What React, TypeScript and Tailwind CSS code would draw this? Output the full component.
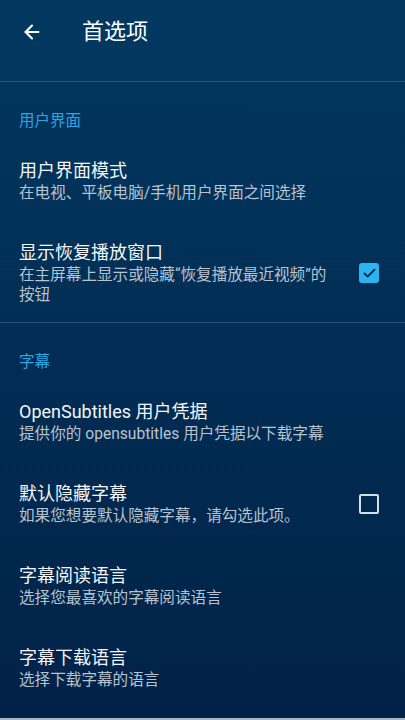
import { ArrowLeft, Check } from "lucide-react";

type Pref = {
  title: string;
  summary: string;
  checkbox?: boolean;
  checked?: boolean;
  last?: boolean;
};

const sections: { header: string; items: Pref[] }[] = [
  {
    header: "用户界面",
    items: [
      { title: "用户界面模式", summary: "在电视、平板电脑/手机用户界面之间选择" },
      {
        title: "显示恢复播放窗口",
        summary: "在主屏幕上显示或隐藏“恢复播放最近视频”的按钮",
        checkbox: true,
        checked: true,
        last: true,
      },
    ],
  },
  {
    header: "字幕",
    items: [
      { title: "OpenSubtitles 用户凭据", summary: "提供你的 opensubtitles 用户凭据以下载字幕" },
      { title: "默认隐藏字幕", summary: "如果您想要默认隐藏字幕，请勾选此项。", checkbox: true },
      { title: "字幕阅读语言", summary: "选择您最喜欢的字幕阅读语言" },
      { title: "字幕下载语言", summary: "选择下载字幕的语言" },
    ],
  },
];

export default function App() {
  return (
    <div
      className="h-[720px] w-[405px] overflow-hidden bg-gradient-to-b from-[#02385f] to-[#012248] text-white border-b-2 border-[#a9b4c0]"
      style={{ fontFamily: 'Roboto, "Noto Sans CJK SC", sans-serif' }}
    >
      <header className="h-[82px] border-b border-[#2b5379] bg-[#02375f]">
        <div className="flex h-[64px] items-center">
          <button className="ml-[21px] flex h-[22px] w-[22px] items-center justify-center text-white">
            <ArrowLeft size={22} strokeWidth={2.4} />
          </button>
          <h1 className="ml-[39px] text-[22px] leading-none text-white">首选项</h1>
        </div>
      </header>

      {sections.map((section, i) => (
        <section key={section.header} className={i > 0 ? "" : "border-b border-[#2b5077]"}>
          <div className="pl-[19px] pt-[29px] pb-[9px] text-[15.5px] leading-[20px] text-[#2aa6e4]">
            {section.header}
          </div>
          {section.items.map((item) => (
            <PrefRow key={item.title} pref={item} />
          ))}
        </section>
      ))}
    </div>
  );
}

function PrefRow({ pref }: { pref: Pref }) {
  return (
    <div className={`flex items-center pl-[19px] pr-[26px] pt-[19px] ${pref.last ? "pb-[17px]" : "pb-[19px]"}`}>
      <div className="flex-1 min-w-0 pr-[24px]">
        <div className="text-[18px] leading-[24px] text-[#f3f6f9]">{pref.title}</div>
        <div className="text-[15.6px] leading-[20px] text-[#b7c3cf]">{pref.summary}</div>
      </div>
      {pref.checkbox &&
        (pref.checked ? (
          <span className="flex h-[20px] w-[20px] shrink-0 items-center justify-center rounded-[3px] bg-[#2bb4f2] text-[#012a4d]">
            <Check size={15} strokeWidth={3} />
          </span>
        ) : (
          <span className="h-[20px] w-[20px] shrink-0 rounded-[2px] border-2 border-[#d5dde5]" />
        ))}
    </div>
  );
}
